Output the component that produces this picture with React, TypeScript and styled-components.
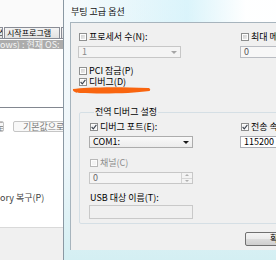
import styled, { createGlobalStyle } from "styled-components";

const GlobalStyle = createGlobalStyle`
  html, body {
    margin: 0;
    padding: 0;
    overflow: hidden;
    background: #ffffff;
  }
  body {
    font-family: "Noto Sans CJK KR", "Noto Sans", sans-serif;
    font-size: 9px;
    color: #000;
  }
`;

const Desktop = styled.div`
  position: relative;
  display: flex;
  width: 276px;
  height: 260px;
  overflow: hidden;
`;

/* ---------- background msconfig window ---------- */

const BackWindow = styled.div`
  flex: none;
  width: 63px;
  display: flex;
  flex-direction: column;
  background: #fafafa;
  overflow: hidden;
`;

const BackTop = styled.div`
  height: 27px;
`;

const TabStrip = styled.div`
  display: flex;
  height: 11px;
  gap: 1px;
  margin-left: -20px;
`;

const Tab = styled.div<{ $w: number }>`
  flex: none;
  width: ${(p) => p.$w}px;
  box-sizing: border-box;
  border: 1px solid #898c95;
  border-bottom: none;
  background: linear-gradient(#f3f3f3, #e2e2e2);
  font-size: 8px;
  line-height: 10px;
  padding-left: 2px;
  white-space: nowrap;
  overflow: hidden;
`;

const TabPage = styled.div`
  height: 190px;
  border-top: 1px solid #898c95;
  border-bottom: 1px solid #d9d9d9;
  box-sizing: border-box;
  background: #ffffff;
  display: flex;
  flex-direction: column;
`;

const ListBox = styled.div`
  height: 69px;
  box-sizing: border-box;
  padding-top: 1px;
  border-bottom: 1px solid #828790;
`;

const ListRowSelected = styled.div`
  height: 9px;
  line-height: 9px;
  background: #acacac;
  color: #f4f4f4;
  white-space: nowrap;
  overflow: hidden;
  font-size: 9px;
`;

const BackButtons = styled.div`
  display: flex;
  gap: 9px;
  margin-top: 13px;
  margin-left: -20px;
`;

const BackButton = styled.div<{ $w: number }>`
  flex: none;
  width: ${(p) => p.$w}px;
  height: 11px;
  box-sizing: border-box;
  border: 1px solid #c5c5c5;
  border-radius: 2px;
  background: #f8f8f8;
  color: #7a7a7a;
  font-size: 9px;
  line-height: 9px;
  padding-left: 9px;
  white-space: nowrap;
  overflow: hidden;
`;

const BackLabel = styled.div`
  margin-top: 61px;
  color: #444;
  white-space: nowrap;
  line-height: 10px;
`;

const BackBottom = styled.div`
  flex: 1;
  background: #f0f0f0;
`;

/* ---------- dialog ---------- */

const Dialog = styled.div`
  flex: none;
  width: 300px;
  height: 260px;
  box-sizing: border-box;
  display: flex;
  flex-direction: column;
  border-left: 1px solid #8a98a3;
  padding: 0 0 10px 6px;
  background: linear-gradient(180deg, #f6fafc 0%, #eef6fa 60%, #d4eff3 100%);
`;

const TitleBar = styled.div`
  height: 22px;
  box-sizing: border-box;
  padding: 6px 0 0 1px;
  line-height: 12px;
  font-size: 9px;
  color: #111;
  background: linear-gradient(90deg, rgba(255, 255, 255, 0) 0%, rgba(200, 240, 250, 0.6) 40%, rgba(255, 255, 255, 0.9) 60%);
`;

const Client = styled.div`
  position: relative;
  flex: 1;
  background: #f0f0f0;
  border-top: 1px solid #a7b4bd;
  border-left: 1px solid #a7b4bd;
  padding: 8px 0 0 7px;
  display: flex;
  flex-direction: column;
`;

const TwoCols = styled.div<{ $left: number }>`
  display: grid;
  grid-template-columns: ${(p) => p.$left}px 110px;
`;

const Col = styled.div<{ $gap: number }>`
  display: flex;
  flex-direction: column;
  gap: ${(p) => p.$gap}px;
`;

const CheckRow = styled.label<{ $disabled?: boolean; $mt?: number }>`
  display: flex;
  align-items: center;
  gap: 2px;
  height: 11px;
  padding-left: 1px;
  margin-top: ${(p) => p.$mt ?? 0}px;
  white-space: nowrap;
  font-size: 9px;
  line-height: 11px;
  color: ${(p) => (p.$disabled ? "#8d8d8d" : "#000")};
`;

const Box = styled.span<{ $checked?: boolean; $disabled?: boolean }>`
  flex: none;
  width: 8px;
  height: 8px;
  box-sizing: border-box;
  border: 1px solid ${(p) => (p.$disabled ? "#b8b8b8" : "#8e8f8f")};
  background: ${(p) =>
    p.$checked
      ? "linear-gradient(135deg, #e9e9e9, #ffffff)"
      : p.$disabled
      ? "#f4f4f4"
      : "linear-gradient(135deg, #c9c9c9, #f4f4f4)"};
  box-shadow: inset 0 0 0 1px #fdfdfd;
  display: flex;
  align-items: center;
  justify-content: center;
`;

const Check = ({ checked, disabled }: { checked?: boolean; disabled?: boolean }) => (
  <Box $checked={checked} $disabled={disabled}>
    {checked && (
      <svg width="6" height="6" viewBox="0 0 6 6">
        <polyline points="0.6,3 2.3,4.8 5.4,0.8" fill="none" stroke="#3d4450" strokeWidth="1.1" />
      </svg>
    )}
  </Box>
);

const Field = styled.div<{ $w: number; $h: number; $bg: string; $border: string; $color?: string; $mt?: number }>`
  width: ${(p) => p.$w}px;
  height: ${(p) => p.$h}px;
  margin-top: ${(p) => p.$mt ?? 0}px;
  box-sizing: border-box;
  border: 1px solid ${(p) => p.$border};
  background: ${(p) => p.$bg};
  color: ${(p) => p.$color ?? "#000"};
  font-size: 9px;
  line-height: ${(p) => p.$h - 2}px;
  padding-left: 3px;
  display: flex;
  align-items: center;
  justify-content: space-between;
`;

const Arrow = styled.span<{ $color: string }>`
  flex: none;
  width: 0;
  height: 0;
  margin-right: 3px;
  border-left: 3px solid transparent;
  border-right: 3px solid transparent;
  border-top: 3px solid ${(p) => p.$color};
`;

const Spin = styled.div`
  flex: none;
  align-self: stretch;
  width: 10px;
  display: flex;
  flex-direction: column;
  border-left: 1px solid #d2d2d2;
`;

const SpinHalf = styled.div<{ $up?: boolean }>`
  flex: 1;
  display: flex;
  align-items: center;
  justify-content: center;
  background: #f3f3f3;
  & + & {
    border-top: 1px solid #d6d6d6;
  }
  &::before {
    content: "";
    width: 0;
    height: 0;
    border-left: 2px solid transparent;
    border-right: 2px solid transparent;
    ${(p) => (p.$up ? "border-bottom: 2px solid #b0b0b0;" : "border-top: 2px solid #b0b0b0;")}
  }
`;

const Group = styled.fieldset`
  margin: 20px 0 0 1px;
  padding: 4px 0 4px 9px;
  width: 230px;
  border: 1px solid #d5dfe5;
  border-radius: 2px;
  min-width: 0;
`;

const Legend = styled.legend`
  margin-left: 5px;
  padding: 0 1px;
  height: 10px;
  line-height: 10px;
  font-size: 9px;
`;

const PlainLabel = styled.div<{ $mt: number }>`
  margin-top: ${(p) => p.$mt}px;
  height: 11px;
  line-height: 11px;
  padding-left: 1px;
  white-space: nowrap;
`;

const Footer = styled.div`
  display: flex;
  margin-top: 8px;
  padding-left: 167px;
`;

const Button = styled.div`
  flex: none;
  width: 70px;
  height: 14px;
  box-sizing: border-box;
  border: 1px solid #707070;
  border-radius: 2px;
  background: linear-gradient(#f4f4f4 0%, #ebebeb 50%, #dddddd 51%, #cfcfcf 100%);
  font-size: 9px;
  line-height: 12px;
  padding-left: 24px;
`;

const Scribble = styled.svg`
  position: absolute;
  left: 1px;
  top: 63px;
  pointer-events: none;
`;

export default function App() {
  return (
    <>
      <GlobalStyle />
      <Desktop>
        <BackWindow>
          <BackTop />
          <TabStrip>
            <Tab $w={23}>서비스</Tab>
            <Tab $w={56}>시작프로그램</Tab>
            <Tab $w={30}>도구</Tab>
          </TabStrip>
          <TabPage>
            <ListBox>
              <ListRowSelected>ows) : 현재 OS:</ListRowSelected>
            </ListBox>
            <BackButtons>
              <BackButton $w={24}>고급</BackButton>
              <BackButton $w={70}>기본값으로 설정(S)</BackButton>
            </BackButtons>
            <BackLabel>ory 복구(P)</BackLabel>
          </TabPage>
          <BackBottom />
        </BackWindow>

        <Dialog>
          <TitleBar>부팅 고급 옵션</TitleBar>
          <Client>
            <TwoCols $left={162}>
              <Col $gap={4}>
                <CheckRow>
                  <Check />
                  프로세서 수(N):
                </CheckRow>
                <Field $w={103} $h={12} $bg="#f4f4f4" $border="#c7c7c7" $color="#8a8a8a">
                  1
                  <Arrow $color="#a5a5a5" />
                </Field>
              </Col>
              <Col $gap={4}>
                <CheckRow>
                  <Check />
                  최대 메모리(M):
                </CheckRow>
                <Field $w={100} $h={12} $bg="#f7f7f7" $border="#b9bcc2" $color="#555">
                  0
                </Field>
              </Col>
            </TwoCols>

            <CheckRow $mt={7}>
              <Check />
              PCI 잠금(P)
            </CheckRow>
            <CheckRow>
              <Check checked />
              디버그(D)
            </CheckRow>

            <Group>
              <Legend>전역 디버그 설정</Legend>
              <TwoCols $left={151}>
                <Col $gap={4}>
                  <CheckRow>
                    <Check checked />
                    디버그 포트(E):
                  </CheckRow>
                  <Field $w={104} $h={12} $bg="linear-gradient(#f9f9f9, #ececec)" $border="#acacac">
                    COM1:
                    <Arrow $color="#1a1a1a" />
                  </Field>
                </Col>
                <Col $gap={4}>
                  <CheckRow>
                    <Check checked />
                    전송 속도(B):
                  </CheckRow>
                  <Field $w={100} $h={12} $bg="#ffffff" $border="#abadb3">
                    115200
                  </Field>
                </Col>
              </TwoCols>
              <CheckRow $disabled $mt={9}>
                <Check disabled />
                채널(C)
              </CheckRow>
              <Field $w={104} $h={12} $bg="#f4f4f4" $border="#c7c7c7" $color="#6a6a6a" $mt={4}>
                0
                <Spin>
                  <SpinHalf $up />
                  <SpinHalf />
                </Spin>
              </Field>
              <PlainLabel $mt={8}>USB 대상 이름(T):</PlainLabel>
              <Field $w={104} $h={14} $bg="#f0f0f0" $border="#c9c9c9" $mt={2} />
            </Group>

            <Footer>
              <Button>확인</Button>
            </Footer>

            <Scribble width="80" height="10" viewBox="0 0 80 10">
              <path
                d="M1,3 C12,1.5 40,0.5 76,2 C78,2.2 79,3.5 77.5,5 C60,7.5 30,8 8,7 C3,6.8 0.5,5.5 1,3 Z"
                fill="#f9650f"
              />
            </Scribble>
          </Client>
        </Dialog>
      </Desktop>
    </>
  );
}
